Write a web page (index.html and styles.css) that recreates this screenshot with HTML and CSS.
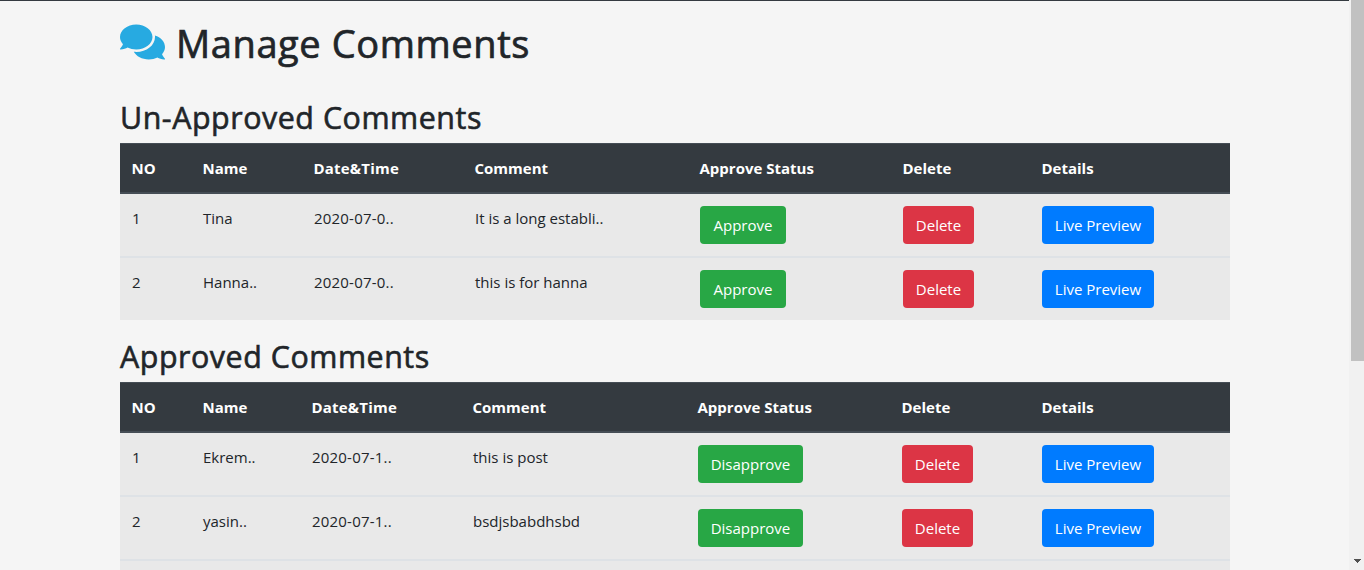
FILE: index.html
```html
<!DOCTYPE html>
<html lang="en">
<head>
<meta charset="utf-8">
<title>Manage Comments</title>
<link rel="stylesheet" href="styles.css">
</head>
<body>
<div class="page">
  <div class="content">
    <h1 class="title">
      <svg class="icon" viewBox="0 0 576 512" aria-hidden="true"><path fill="currentColor" d="M416 192c0-88.4-93.1-160-208-160S0 103.6 0 192c0 34.3 14.1 65.9 38 92-13.4 30.2-35.5 54.2-35.800 54.5-2.200 2.300-2.800 5.700-1.500 8.700S4.800 352 8 352c36.600 0 66.900-12.300 88.700-25 32.200 15.700 70.300 25 111.300 25 114.900 0 208-71.600 208-160zm122 220c23.900-26 38-57.700 38-92 0-66.900-53.500-124.200-129.300-148.100.9 6.600 1.300 13.300 1.300 20.100 0 105.900-107.700 192-240 192-10.800 0-21.300-.8-31.700-1.900C207.800 439.600 281.800 480 368 480c41 0 79.100-9.200 111.300-25 21.800 12.700 52.100 25 88.700 25 3.200 0 6.100-1.900 7.300-4.800 1.300-2.900.7-6.300-1.500-8.700-.3-.3-22.400-24.200-35.800-54.500z"/></svg>
      <span>Manage Comments</span>
    </h1>

    <h2 class="subtitle subtitle-pending">Un-Approved Comments</h2>
    <table class="table">
      <colgroup><col class="c-no"><col class="c-name-a"><col class="c-date"><col class="c-comment"><col class="c-status-a"><col class="c-delete-a"><col></colgroup>
      <thead>
        <tr><th>NO</th><th>Name</th><th class="date">Date&amp;Time</th><th>Comment</th><th>Approve Status</th><th>Delete</th><th>Details</th></tr>
      </thead>
      <tbody>
        <tr><td>1</td><td>Tina</td><td class="date">2020-07-0..</td><td>It is a long establi..</td><td><a class="btn approve">Approve</a></td><td><a class="btn delete">Delete</a></td><td><a class="btn preview">Live Preview</a></td></tr>
        <tr><td>2</td><td>Hanna..</td><td class="date">2020-07-0..</td><td>this is for hanna</td><td><a class="btn approve">Approve</a></td><td><a class="btn delete">Delete</a></td><td><a class="btn preview">Live Preview</a></td></tr>
      </tbody>
    </table>

    <h2 class="subtitle subtitle-approved">Approved Comments</h2>
    <table class="table">
      <colgroup><col class="c-no"><col class="c-name-b"><col class="c-date"><col class="c-comment"><col class="c-status-b"><col class="c-delete-b"><col></colgroup>
      <thead>
        <tr><th>NO</th><th>Name</th><th class="date">Date&amp;Time</th><th>Comment</th><th>Approve Status</th><th>Delete</th><th>Details</th></tr>
      </thead>
      <tbody>
        <tr><td>1</td><td>Ekrem..</td><td class="date">2020-07-1..</td><td>this is post</td><td><a class="btn disapprove">Disapprove</a></td><td><a class="btn delete">Delete</a></td><td><a class="btn preview">Live Preview</a></td></tr>
        <tr><td>2</td><td>yasin..</td><td class="date">2020-07-1..</td><td>bsdjsbabdhsbd</td><td><a class="btn disapprove">Disapprove</a></td><td><a class="btn delete">Delete</a></td><td><a class="btn preview">Live Preview</a></td></tr>
        <tr><td></td><td></td><td></td><td></td><td></td><td></td><td></td></tr>
      </tbody>
    </table>
  </div>
  <div class="scrollbar">
    <div class="thumb"></div>
    <svg class="arrow" viewBox="0 0 7 4" shape-rendering="crispEdges"><path fill="#505050" d="M0 0h7v1h-1v1h-1v1h-1v1h-1v-1h-1v-1h-1v-1h-1z"/></svg>
  </div>
</div>
</body>
</html>
```
FILE: styles.css
```css
* { box-sizing: border-box; }
body {
  margin: 0;
  background: #f5f5f5;
  color: #212529;
  font-family: "Open Sans", "Noto Sans", sans-serif;
  font-size: 15px;
  line-height: 24px;
}
.page {
  display: flex;
  height: 570px;
  overflow: hidden;
}
.content {
  flex: 1;
  padding: 18px 119px 0 120px;
  border-top: 1px solid #343a40;
}
.title {
  display: flex;
  align-items: center;
  gap: 11px;
  height: 48px;
  margin: 0;
  font-size: 38px;
  font-weight: 500;
  line-height: 48px;
  letter-spacing: 0.6px;
  -webkit-text-stroke: 0.7px currentColor;
  white-space: nowrap;
}
.icon { width: 45px; height: 40px; margin-top: -2px; color: #27aae1; }
.subtitle {
  height: 38px;
  font-size: 30.4px;
  font-weight: 500;
  line-height: 42px;
  letter-spacing: 0.54px;
  -webkit-text-stroke: 0.6px currentColor;
  white-space: nowrap;
}
.subtitle-pending { margin: 30px 0 8px; }
.subtitle-approved { margin: 16px 0 8px; }
.table {
  width: 1110px;
  table-layout: fixed;
  border-collapse: separate;
  border-spacing: 0;
  background: #e9e9e9;
  white-space: nowrap;
}
.c-no { width: 71px; }
.c-name-a { width: 111px; }
.c-name-b { width: 109px; }
.c-date { width: 161px; }
.c-comment { width: 225px; }
.c-status-a { width: 203px; }
.c-status-b { width: 204px; }
.c-delete-a { width: 139px; }
.c-delete-b { width: 140px; }
.table th {
  height: 51px;
  padding: 12px 12px 12px 11.5px;
  border-top: 1px solid #454d55;
  border-bottom: 2px solid #454d55;
  background: #343a40;
  color: #fff;
  font-weight: 700;
  text-align: left;
}
.table td {
  height: 62px;
  padding: 12px;
  vertical-align: top;
}
.table .date { letter-spacing: 0.2px; }
.table tr + tr td {
  height: 64px;
  border-top: 2px solid #dee2e6;
}
.btn {
  display: flex;
  align-items: center;
  justify-content: center;
  height: 38px;
  border-radius: 4px;
  color: #fff;
}
.approve { width: 86px; background: #28a745; }
.disapprove { width: 105px; background: #28a745; }
.delete { width: 71px; background: #dc3545; }
.preview { width: 112px; background: #007bff; }
.scrollbar {
  display: flex;
  flex-direction: column;
  justify-content: space-between;
  width: 15px;
  padding: 0 0 7px 2px;
  background: #f1f1f1;
}
.thumb { height: 361px; background: #c1c1c1; }
.arrow { width: 7px; height: 4px; margin-left: 3px; }
```
